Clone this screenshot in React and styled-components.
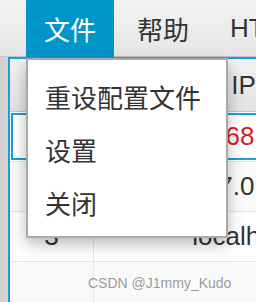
import React from 'react';
import styled, { createGlobalStyle } from 'styled-components';

const GlobalStyle = createGlobalStyle`
  html, body {
    margin: 0;
    padding: 0;
    background: #f4f4f4;
  }
  body {
    font-family: "Liberation Sans", "Noto Sans CJK SC", sans-serif;
  }
`;

const CJK = `"Liberation Sans", "Noto Sans CJK SC", sans-serif`;

const Window = styled.div`
  position: relative;
  width: 256px;
  height: 302px;
  overflow: hidden;
  background: #f4f4f4;
  display: flex;
  flex-direction: column;
`;

const MenuBar = styled.div`
  height: 56px;
  flex: none;
  display: flex;
  align-items: stretch;
  gap: 5px;
  padding-left: 26px;
  background: linear-gradient(#f3f3f3, #e6e6e6);
  border-bottom: 1px solid #c4c4c4;
`;

const MenuTitle = styled.div`
  display: flex;
  align-items: center;
  padding: 0 18px;
  height: ${p => (p.$active ? '57px' : '56px')};
  font-family: ${CJK};
  font-size: 26px;
  white-space: nowrap;
  color: ${p => (p.$active ? '#ffffff' : '#333333')};
  background: ${p => (p.$active ? '#0096c9' : 'transparent')};
  position: relative;
  z-index: 2;
`;

const Body = styled.div`
  flex: 1;
  display: flex;
  min-height: 0;
`;

const SideStrip = styled.div`
  width: 8px;
  flex: none;
  background: linear-gradient(90deg, #cfcfcf, #d6d6d6);
`;

const Table = styled.div`
  flex: 1;
  min-width: 0;
  overflow: hidden;
  border-top: 2px solid #1a9fd4;
  border-left: 2px solid #1a9fd4;
  background: #ffffff;
`;

const Row = styled.div`
  display: grid;
  grid-template-columns: 84px 300px;
  height: ${p => (p.$header ? '53px' : '50px')};
  box-sizing: border-box;
  background: ${p =>
    p.$header ? 'linear-gradient(#f3f3f3, #e1e1e1)' : p.$odd ? '#fafafa' : '#ffffff'};
  border-bottom: 1px solid ${p => (p.$header ? '#c6c6c6' : '#e4e4e4')};
  position: relative;
  ${p =>
    p.$focused &&
    `
    &::after {
      content: '';
      position: absolute;
      inset: 1px 0 1px 1px;
      border: 2px solid #1a9fd4;
      border-right: none;
      pointer-events: none;
    }
  `}
`;

const Cell = styled.div`
  display: flex;
  align-items: center;
  justify-content: center;
  font-family: ${CJK};
  font-size: 26px;
  white-space: nowrap;
  overflow: hidden;
  color: ${p => p.$color || '#333333'};
  border-right: 1px solid ${p => (p.$header ? '#c6c6c6' : '#e6e6e6')};
`;

const Dropdown = styled.div`
  position: absolute;
  left: 26px;
  top: 58px;
  width: 202px;
  box-sizing: border-box;
  padding: 10px 0 7px;
  background: #ffffff;
  border: 2px solid #a9a9a9;
  box-shadow: 0 6px 14px rgba(0, 0, 0, 0.28);
  z-index: 5;
`;

const DropItem = styled.div`
  height: 53px;
  display: flex;
  align-items: center;
  padding-left: 17px;
  font-family: ${CJK};
  font-size: 26px;
  color: #333333;
  white-space: nowrap;
`;

const Watermark = styled.div`
  position: absolute;
  left: 88px;
  top: 275px;
  font-family: "Liberation Sans", sans-serif;
  font-size: 14px;
  line-height: 16px;
  color: rgba(120, 120, 120, 0.75);
  z-index: 6;
  white-space: nowrap;
`;

const rows = [
  { id: '1', ip: '192.168.100.1', color: '#d81e1e', focused: true },
  { id: '2', ip: '127.0.0.1' },
  { id: '3', ip: 'localhost' },
  { id: '', ip: '' },
];

export default function App() {
  return (
    <>
      <GlobalStyle />
      <Window>
        <MenuBar>
          <MenuTitle $active>文件</MenuTitle>
          <MenuTitle>帮助</MenuTitle>
          <MenuTitle>HTTP</MenuTitle>
        </MenuBar>
        <Body>
          <SideStrip />
          <Table>
            <Row $header>
              <Cell $header>序号</Cell>
              <Cell $header>IP</Cell>
            </Row>
            {rows.map((r, i) => (
              <Row key={i} $odd={i % 2 === 1} $focused={r.focused}>
                <Cell>{r.id}</Cell>
                <Cell $color={r.color}>{r.ip}</Cell>
              </Row>
            ))}
          </Table>
        </Body>
        <Dropdown>
          <DropItem>重设配置文件</DropItem>
          <DropItem>设置</DropItem>
          <DropItem>关闭</DropItem>
        </Dropdown>
        <Watermark>CSDN @J1mmy_Kudo</Watermark>
      </Window>
    </>
  );
}
